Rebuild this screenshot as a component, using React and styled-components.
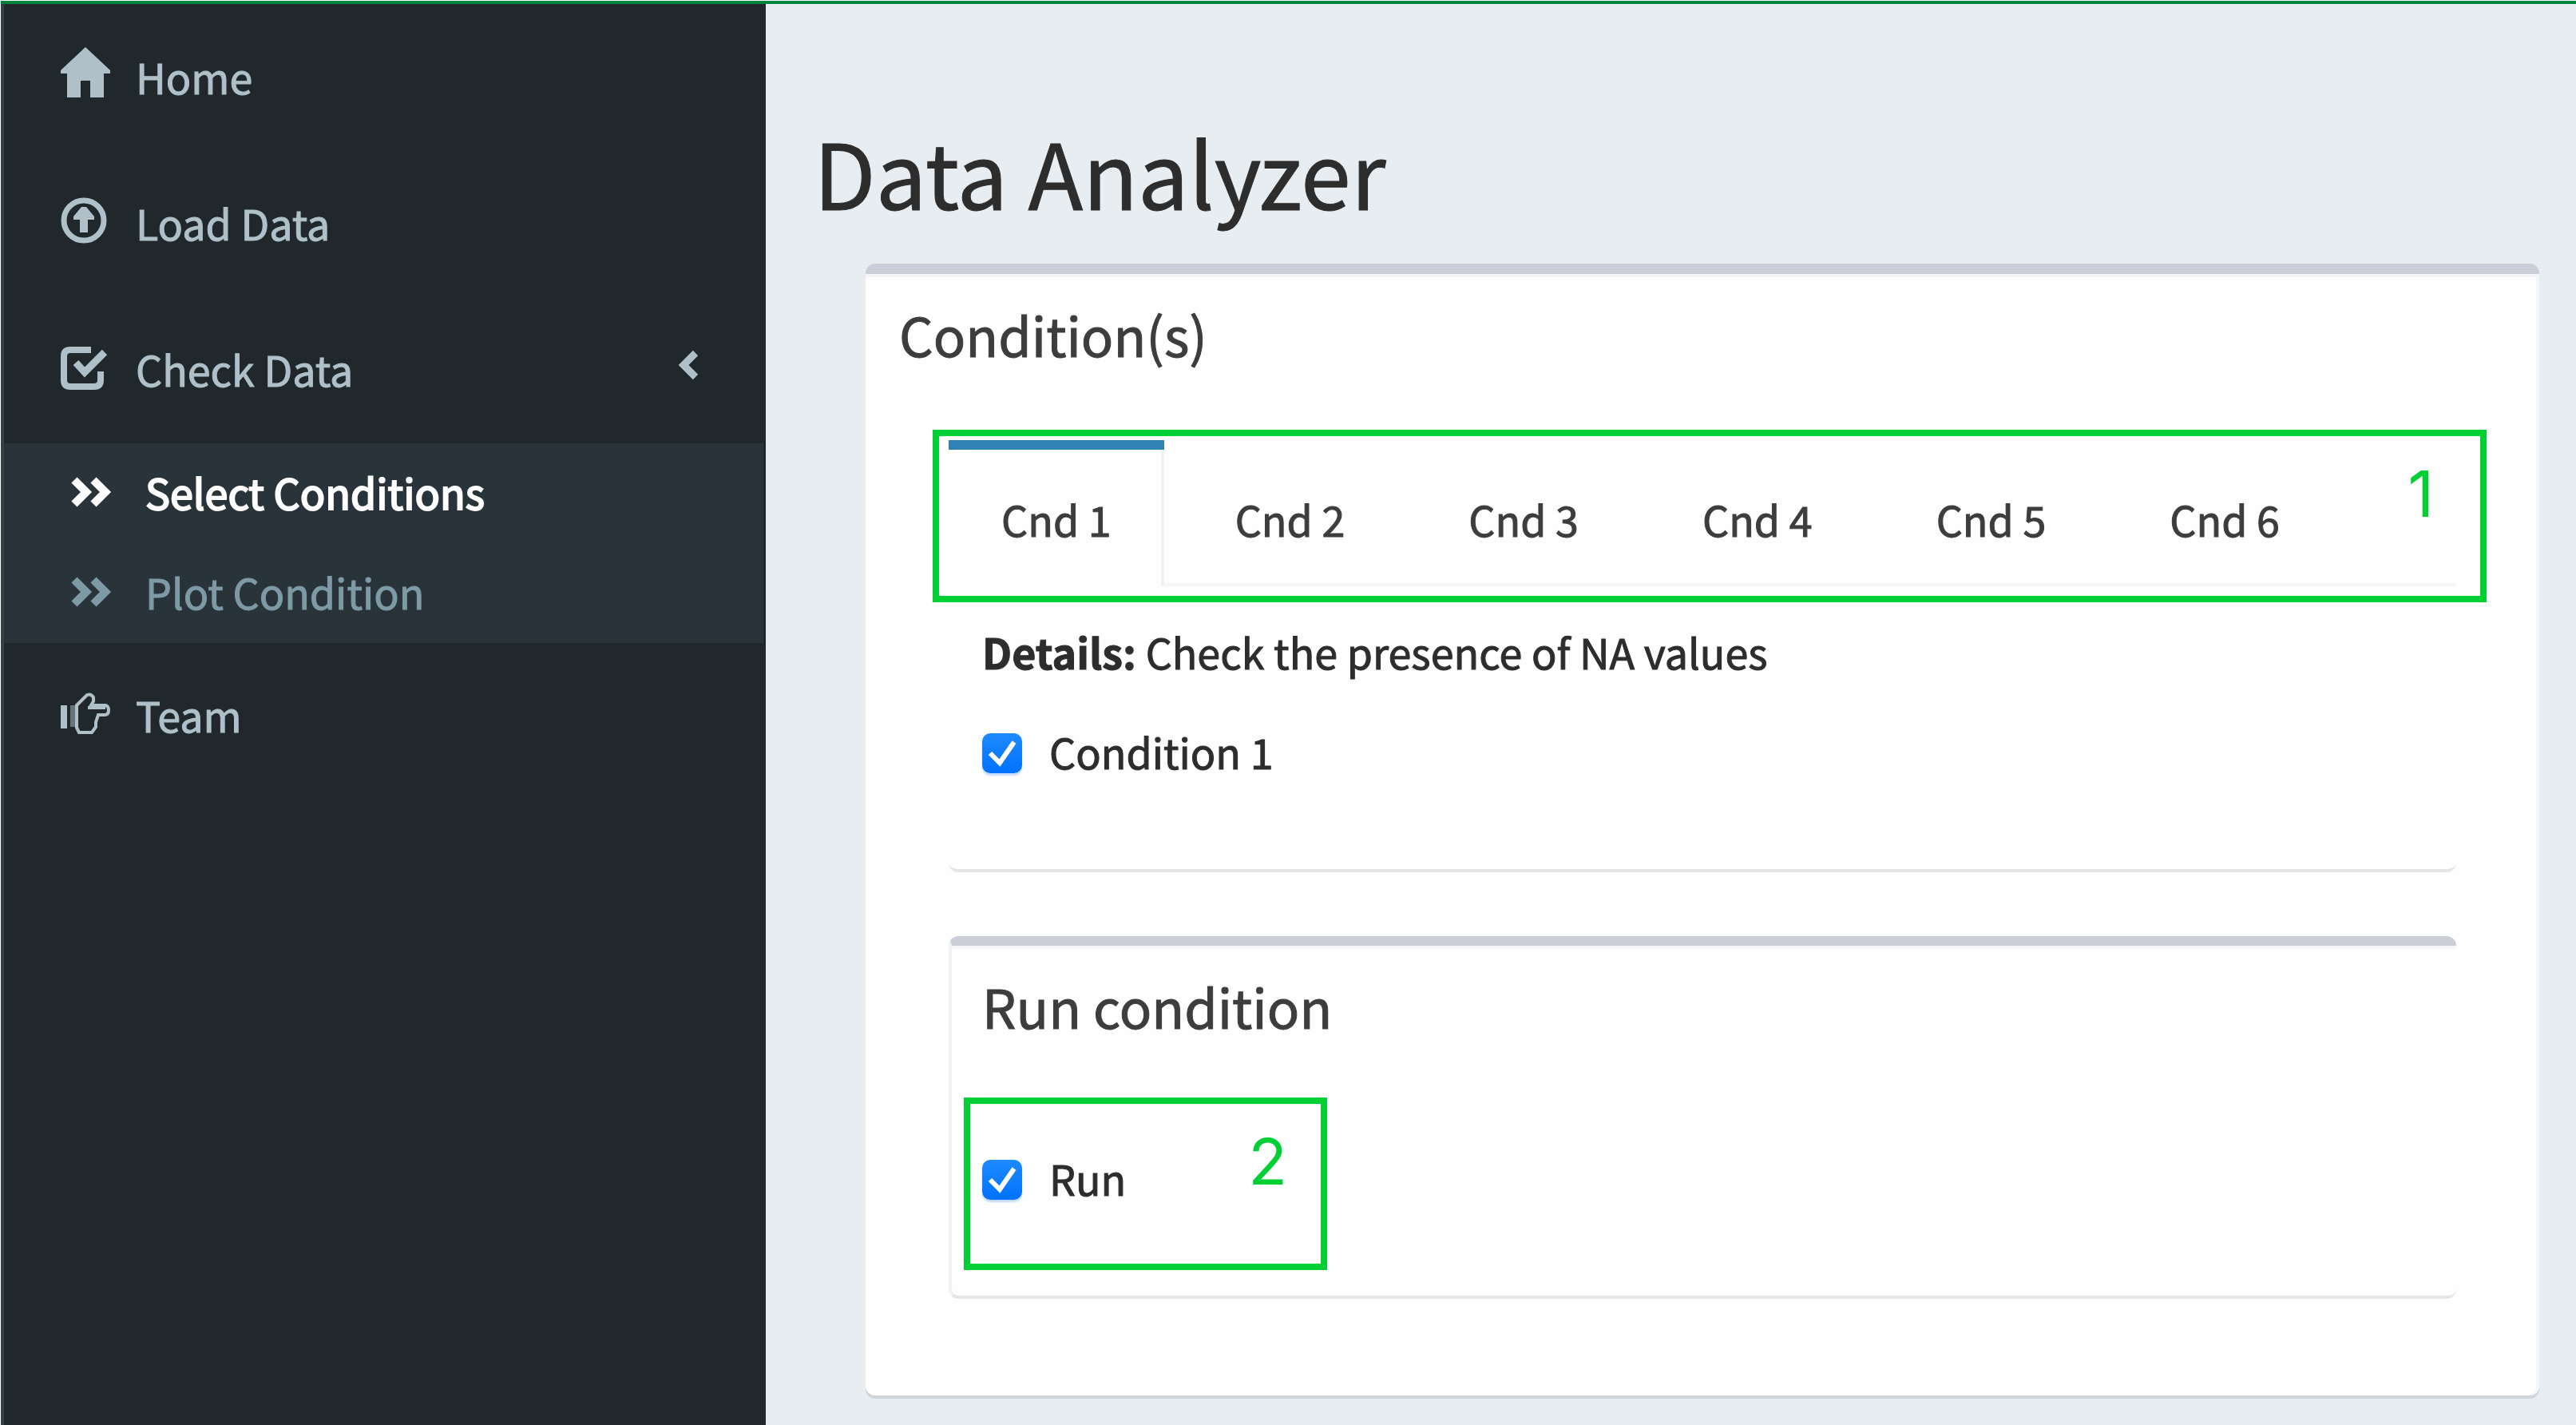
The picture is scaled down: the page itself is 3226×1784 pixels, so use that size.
import React, { useState } from "react";
import styled, { createGlobalStyle } from "styled-components";

const GlobalStyle = createGlobalStyle`
  *, *::before, *::after { box-sizing: border-box; }
  body {
    margin: 0;
    background: #e8edf2;
    color: #2d2d2d;
    font-family: "Noto Sans CJK SC", "Noto Sans", sans-serif;
    font-size: 52px;
    line-height: 84px;
    -webkit-text-stroke: 1px currentColor;
  }
`;

const Page = styled.div`
  display: flex;
  flex-direction: column;
  min-height: 100vh;
  border-top: 1px solid #fff;
  border-left: 1px solid #fff;
`;

const TopBar = styled.header`
  height: 4px;
  background: #00843f;
`;

const Columns = styled.div`
  flex: 1;
  display: flex;
`;

const Sidebar = styled.nav`
  flex: 0 0 958px;
  padding: 1px 3px 0 0;
  border-left: 4px solid #344145;
  background: #20282b;
`;

const Menu = styled.ul`
  margin: 0;
  padding: 0;
  list-style: none;
  background: ${(p) => (p.$nested ? "#283439" : "transparent")};
`;

const MenuLink = styled.a`
  display: flex;
  align-items: center;
  gap: ${(p) => (p.$nested ? 42 : 30)}px;
  height: ${(p) => (p.$nested ? 125 : 183)}px;
  padding: 0 80px 0 71px;
  color: ${(p) => (p.$active ? "#fff" : p.$nested ? "#7d9aa6" : "#afc0c8")};
  -webkit-text-stroke-width: ${(p) => (p.$active ? 2 : 1)}px;
  text-decoration: none;
`;

const MenuText = styled.span`
  flex: 1;
  padding-bottom: 4px;
`;

const MenuIcon = styled.svg`
  flex: none;
  width: ${(p) => p.$width || 64}px;
  height: 79px;
  fill: none;
  stroke: currentColor;
`;

const Main = styled.main`
  flex: 1;
  min-width: 0;
  padding: 140px 46px 33px 60px;
`;

const PageTitle = styled.h1`
  margin: 0 0 47px;
  font-size: 113px;
  line-height: 138px;
  font-weight: 400;
`;

const Box = styled.section`
  margin-left: 65px;
  padding: 37px 104px 121px;
  border-top: 13px solid #cbced9;
  border-radius: 12px;
  background: #fefefe;
  box-shadow: inset 0 4px 0 #f4f4f9, inset -4px 0 0 #f4f6f8, 0 4px 0 #d0d4d8;
`;

const InnerBox = styled.section`
  margin-top: 80px;
  padding: 37px 42px 105px 38px;
  border: 0 solid #e5e5e5;
  border-width: 12px 0 4px 4px;
  border-top-color: #cbced9;
  border-left-color: #f1f1f6;
  border-radius: 12px;
  box-shadow: inset 0 4px 0 #f4f4f9;
`;

const BoxTitle = styled.h2`
  margin: 0 0 ${(p) => p.$gap}px ${(p) => p.$outdent || 0}px;
  color: #3d3d3d;
  font-size: 67px;
  line-height: 75px;
  font-weight: 400;
`;

const TabArea = styled.div`
  position: relative;
`;

const TabList = styled.div`
  display: flex;
  gap: 23px;
  border-bottom: 4px solid #f6f6f6;
`;

const Tab = styled.button`
  margin: 0 0 -4px;
  padding: 0 62px 42px 66px;
  border: 0 solid ${(p) => (p.$active ? "#f3f3f3" : "transparent")};
  border-width: 0 4px 0 0;
  background: ${(p) => (p.$active ? "#fefefe" : "transparent")};
  color: #3d3d3d;
  font: inherit;
  cursor: pointer;

  &::before {
    content: "";
    display: block;
    height: 12px;
    margin: 0 -66px 45px;
    background: ${(p) => (p.$active ? "#3182b4" : "transparent")};
  }
`;

const TabPane = styled.div`
  padding: 40px 42px 105px;
  border-bottom: 4px solid #e5e5e5;
  border-radius: 0 0 12px 12px;
`;

const Details = styled.p`
  margin: 0 0 41px;
`;

const CheckLabel = styled.label`
  display: flex;
  align-items: center;
  gap: 34px;
`;

const CheckFrame = styled.span`
  display: grid;
  margin-top: 3px;

  > * { grid-area: 1 / 1; }
`;

const CheckInput = styled.input`
  appearance: none;
  width: 50px;
  height: 50px;
  margin: 0;
  border-radius: 10px;
  box-shadow: 0 3px 2px #c0dbff;
  background: #fff;

  &:checked { background: linear-gradient(#1f8aff, #0072ff); }
`;

const CheckMark = styled.svg`
  width: 50px;
  height: 50px;
  fill: none;
  stroke: #fff;
  stroke-width: 6;
  pointer-events: none;
`;

const Callout = styled.div`
  position: absolute;
  display: flex;
  justify-content: flex-end;
  border: 8px solid #00d033;
  color: #00d033;
  font: 400 80px/96px Inter, sans-serif;
  -webkit-text-stroke-width: 0;
  pointer-events: none;
`;

const TabsCallout = styled(Callout)`
  inset: -13px -38px -20px -20px;
  padding: 24px 58px 0 0;
`;

const RunCallout = styled(Callout)`
  top: -59px;
  left: -23px;
  width: 455px;
  height: 216px;
  padding: 24px 42px 0 0;
`;

const RunArea = styled.div`
  position: relative;
`;

const icons = {
  home: (
    <path
      d="M31 1L62 30V34H54V64H37V43H25V64H8V34H0V30Z"
      fill="currentColor"
      stroke="none"
    />
  ),
  upload: (
    <>
      <circle cx="29" cy="35" r="25" strokeWidth="7" />
      <path
        d="M26 18H32L42 30V34H34V50H24V34H16V30Z"
        fill="currentColor"
        stroke="none"
      />
    </>
  ),
  check: (
    <>
      <path
        d="M38 14H12Q4 14 4 22V52Q4 60 12 60H42Q50 60 50 52V41"
        strokeWidth="8"
      />
      <path d="M19 30L30 42L55 17" strokeWidth="9" />
    </>
  ),
  hand: (
    <>
      <path d="M0 26H8V55H0Z" fill="currentColor" stroke="none" />
      <path d="M15 26V53" strokeWidth="6" opacity="0.5" />
      <path
        d="M20 26L33 13Q38 11 41 16V21L38 26H56Q60 27 60 32Q60 38 55 38H47L44 47V53L39 60H23L20 54ZM34 29H56"
        strokeWidth="4"
      />
    </>
  ),
  angles: (
    <path d="M17 23L32 38L17 53M41 23L56 38L41 53" strokeWidth="10" />
  ),
};

function Icon({ name }) {
  return (
    <MenuIcon viewBox="0 0 64 79" aria-hidden="true">
      {icons[name]}
    </MenuIcon>
  );
}

function MenuItem({ icon, text, nested, active, arrow, children }) {
  return (
    <li>
      <MenuLink href="#" $nested={nested} $active={active}>
        <Icon name={icon} />
        <MenuText>{text}</MenuText>
        {arrow && (
          <MenuIcon $width={32} viewBox="0 0 32 79" aria-hidden="true">
            <path d="M27 18L12 33L27 48" strokeWidth="9" />
          </MenuIcon>
        )}
      </MenuLink>
      {children}
    </li>
  );
}

function Checkbox({ id, children }) {
  return (
    <CheckLabel htmlFor={id}>
      <CheckFrame>
        <CheckInput id={id} type="checkbox" defaultChecked />
        <CheckMark viewBox="0 0 50 50" aria-hidden="true">
          <path d="M10 25L22 37L40 11" />
        </CheckMark>
      </CheckFrame>
      {children}
    </CheckLabel>
  );
}

const tabs = ["Cnd 1", "Cnd 2", "Cnd 3", "Cnd 4", "Cnd 5", "Cnd 6"];

export default function App() {
  const [current, setCurrent] = useState(0);
  return (
    <>
      <GlobalStyle />
      <Page>
        <TopBar />
        <Columns>
          <Sidebar>
            <Menu>
              <MenuItem icon="home" text="Home" />
              <MenuItem icon="upload" text="Load Data" />
              <MenuItem icon="check" text="Check Data" arrow>
                <Menu $nested>
                  <MenuItem icon="angles" text="Select Conditions" nested active />
                  <MenuItem icon="angles" text="Plot Condition" nested />
                </Menu>
              </MenuItem>
              <MenuItem icon="hand" text="Team" />
            </Menu>
          </Sidebar>
          <Main>
            <PageTitle>Data Analyzer</PageTitle>
            <Box>
              <BoxTitle $gap={96} $outdent={-62}>Condition(s)</BoxTitle>
              <TabArea>
                <TabList role="tablist">
                  {tabs.map((name, i) => (
                    <Tab
                      key={name}
                      type="button"
                      role="tab"
                      aria-selected={i === current}
                      $active={i === current}
                      onClick={() => setCurrent(i)}
                    >
                      {name}
                    </Tab>
                  ))}
                </TabList>
                <TabsCallout>1</TabsCallout>
              </TabArea>
              <TabPane role="tabpanel">
                <Details>
                  <strong>Details:</strong> Check the presence of NA values
                </Details>
                <Checkbox id="condition">Condition 1</Checkbox>
              </TabPane>
              <InnerBox>
                <BoxTitle $gap={137}>Run condition</BoxTitle>
                <RunArea>
                  <Checkbox id="run">Run</Checkbox>
                  <RunCallout>2</RunCallout>
                </RunArea>
              </InnerBox>
            </Box>
          </Main>
        </Columns>
      </Page>
    </>
  );
}
